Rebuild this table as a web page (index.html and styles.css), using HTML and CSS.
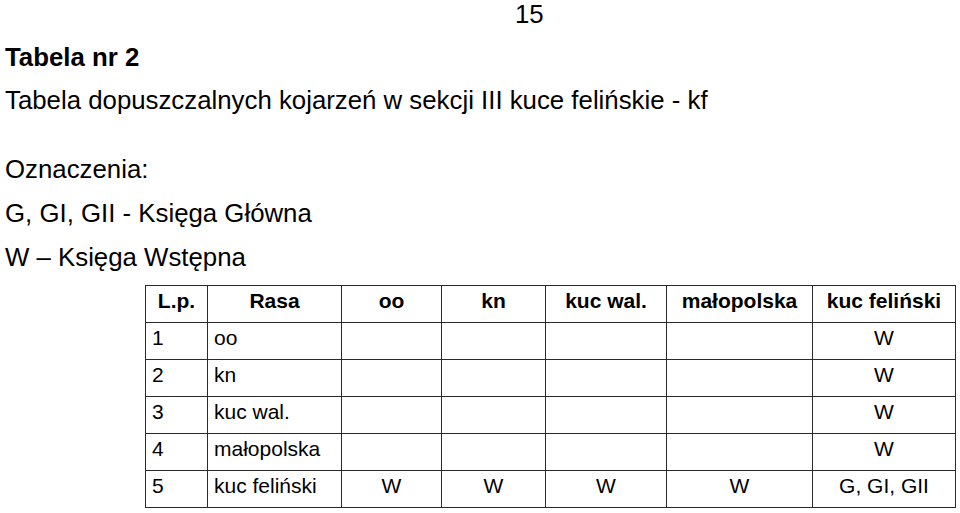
FILE: index.html
```html
<!DOCTYPE html>
<html lang="pl">
<head>
<meta charset="utf-8">
<title>Tabela nr 2</title>
<link rel="stylesheet" href="styles.css">
</head>
<body>
<div class="page">
  <div class="page-num">15</div>
  <h1 class="title">Tabela nr 2</h1>
  <p class="subtitle">Tabela dopuszczalnych kojarzeń w sekcji III kuce felińskie - kf</p>
  <div class="legend">
    <p class="legend-line">Oznaczenia:</p>
    <p class="legend-line">G, GI, GII - Księga Główna</p>
    <p class="legend-line">W – Księga Wstępna</p>
  </div>
  <table class="matrix">
    <colgroup>
      <col class="c-lp">
      <col class="c-rasa">
      <col class="c-oo">
      <col class="c-kn">
      <col class="c-kw">
      <col class="c-mp">
      <col class="c-kf">
    </colgroup>
    <thead>
      <tr>
        <th>L.p.</th>
        <th>Rasa</th>
        <th>oo</th>
        <th>kn</th>
        <th>kuc wal.</th>
        <th>małopolska</th>
        <th>kuc feliński</th>
      </tr>
    </thead>
    <tbody>
      <tr>
        <td class="left">1</td><td class="left">oo</td><td></td><td></td><td></td><td></td><td>W</td>
      </tr>
      <tr>
        <td class="left">2</td><td class="left">kn</td><td></td><td></td><td></td><td></td><td>W</td>
      </tr>
      <tr>
        <td class="left">3</td><td class="left">kuc wal.</td><td></td><td></td><td></td><td></td><td>W</td>
      </tr>
      <tr>
        <td class="left">4</td><td class="left">małopolska</td><td></td><td></td><td></td><td></td><td>W</td>
      </tr>
      <tr>
        <td class="left">5</td><td class="left">kuc feliński</td><td>W</td><td>W</td><td>W</td><td>W</td><td>G, GI, GII</td>
      </tr>
    </tbody>
  </table>
</div>
</body>
</html>
```

FILE: styles.css
```css
html, body {
  margin: 0;
  padding: 0;
  background: #ffffff;
}

body {
  font-family: "Liberation Sans", Arial, sans-serif;
  color: #000000;
}

.page {
  padding-left: 5px;
}

.page-num {
  font-size: 25.8px;
  line-height: 28px;
  margin: 0;
  padding-left: 510px;
}

.title {
  font-size: 25.8px;
  font-weight: bold;
  line-height: 28px;
  margin: 15px 0 0 0;
}

.subtitle {
  font-size: 25.8px;
  line-height: 28px;
  margin: 15px 0 0 0;
}

.legend {
  margin-top: 41px;
}

.legend-line {
  font-size: 25.8px;
  line-height: 28px;
  margin: 0 0 16px 0;
}

.legend-line:last-child {
  margin-bottom: 0;
}

.matrix {
  margin-top: 14px;
  margin-left: 140px;
  border-collapse: collapse;
  table-layout: fixed;
  width: 810px;
  font-size: 21px;
}

.c-lp { width: 62px; }
.c-rasa { width: 134px; }
.c-oo { width: 100px; }
.c-kn { width: 104px; }
.c-kw { width: 121px; }
.c-mp { width: 146px; }
.c-kf { width: 143px; }

.matrix th,
.matrix td {
  border: 1px solid #2a2a2a;
  height: 37px;
  padding: 3px 6px 0 6px;
  vertical-align: top;
  text-align: center;
  line-height: 24px;
  box-sizing: border-box;
  white-space: nowrap;
}

.matrix th {
  font-weight: bold;
}

.matrix td.left {
  text-align: left;
}
```
